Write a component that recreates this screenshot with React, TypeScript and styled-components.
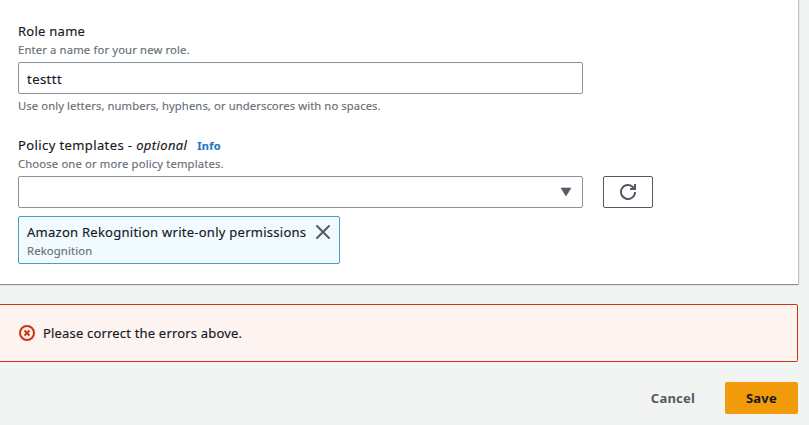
import React from "react";
import styled, { createGlobalStyle } from "styled-components";

const GlobalStyle = createGlobalStyle`
  *, *::before, *::after { box-sizing: border-box; }
  body {
    margin: 0;
    overflow: hidden;
    background: #f2f3f3;
    color: #16191f;
    font-family: "Noto Sans", "Open Sans", sans-serif;
    font-size: 13px;
    line-height: 20px;
    -webkit-text-stroke: 0.15px currentColor;
  }
`;

const Page = styled.main`
  width: 809px;
  height: 425px;
  padding-right: 11px;
  display: flex;
  flex-direction: column;
  overflow: hidden;
`;

const Panel = styled.section`
  height: 284px;
  padding: 21px 18px 0;
  background: #fff;
  box-shadow: 0 1px 0 #879596, 1px 0 0 #bcc4c5, 1px 1px 0 #a9b3b4, 0 2px 0 #dfe3e3, 2px 0 0 #e6e9e9;
`;

const Field = styled.div`
  display: flex;
  flex-direction: column;
  & + & { margin-top: 21px; }
`;

const Label = styled.label<{ $tracking?: string }>`
  height: 20px;
  white-space: pre;
  letter-spacing: ${(p) => p.$tracking ?? "0.26px"};
`;

const Hint = styled.span`
  height: 16px;
  font-size: 11.25px;
  line-height: 18px;
  color: #687078;
  white-space: nowrap;
  letter-spacing: 0.15px;
`;

const Constraint = styled(Hint)`
  line-height: 16px;
  letter-spacing: 0.09px;
`;

const InfoLink = styled.a`
  margin-left: 10px;
  color: #2b74c2;
  font-size: 11px;
  font-weight: 700;
  letter-spacing: 0.2px;
`;

const TextInput = styled.input`
  width: 565px;
  height: 32px;
  margin: 5px 0 4px;
  padding: 2px 8px 0;
  border: 1px solid #879596;
  border-radius: 2px;
  background: #fff;
  color: #16191f;
  font: inherit;
  letter-spacing: 0.45px;
  outline: none;
`;

const SelectRow = styled.div`
  display: flex;
  gap: 20px;
  margin: 5px 0 8px;
`;

const SelectTrigger = styled.button`
  display: flex;
  align-items: center;
  justify-content: flex-end;
  width: 565px;
  height: 32px;
  padding: 0 10px;
  border: 1px solid #879596;
  border-radius: 2px;
  background: #fff;
`;

const IconButton = styled.button`
  display: flex;
  align-items: center;
  justify-content: center;
  width: 50px;
  height: 32px;
  padding: 0;
  border: 1px solid #545b64;
  border-radius: 2px;
  background: #fff;
`;

const Token = styled.div`
  display: flex;
  justify-content: space-between;
  width: 322px;
  height: 48px;
  padding: 5px 8px 0;
  border: 1px solid #44a0c4;
  border-radius: 2px;
  background: #f1faff;
`;

const TokenText = styled.div`
  display: flex;
  flex-direction: column;
`;

const DismissButton = styled.button`
  width: 16px;
  height: 16px;
  margin-top: 2px;
  padding: 0;
  border: 0;
  background: none;
`;

const Icon = styled.svg`
  display: block;
  flex: none;
  fill: none;
`;

const Alert = styled.div`
  display: flex;
  align-items: center;
  gap: 8px;
  height: 58px;
  margin-top: 20px;
  padding-left: 19px;
  border: 1px solid #d13212;
  border-left: 0;
  border-radius: 0 2px 2px 0;
  background: #fdf3f1;
`;

const Message = styled.span`
  letter-spacing: 0.18px;
`;

const Actions = styled.div`
  display: flex;
  justify-content: flex-end;
  gap: 10px;
  margin-top: 20px;
`;

const Button = styled.button<{ $primary?: boolean }>`
  height: 32px;
  padding: 0;
  width: ${(p) => (p.$primary ? "73px" : "84px")};
  border: 0;
  border-radius: 2px;
  background: ${(p) => (p.$primary ? "#f19a0a" : "transparent")};
  color: ${(p) => (p.$primary ? "#16191f" : "#545b64")};
  font: inherit;
  font-weight: 700;
  letter-spacing: 0.25px;
  -webkit-text-stroke: 0;
`;

export default function App() {
  return (
    <>
      <GlobalStyle />
      <Page>
        <Panel>
          <Field>
            <Label htmlFor="role">Role name</Label>
            <Hint>Enter a name for your new role.</Hint>
            <TextInput id="role" defaultValue="testtt" />
            <Constraint>
              Use only letters, numbers, hyphens, or underscores with no spaces.
            </Constraint>
          </Field>
          <Field>
            <Label $tracking="0.39px">
              Policy templates - <em>optional</em>
              <InfoLink>Info</InfoLink>
            </Label>
            <Hint>Choose one or more policy templates.</Hint>
            <SelectRow>
              <SelectTrigger aria-label="Policy templates">
                <Icon width="12" height="10" viewBox="0 0 12 10">
                  <path d="M1 1h10L6 9z" fill="#545b64" stroke="#545b64" strokeLinejoin="round" strokeWidth=".6" />
                </Icon>
              </SelectTrigger>
              <IconButton aria-label="Refresh">
                <Icon width="16" height="16" viewBox="0 0 16 16" stroke="#545b64" strokeWidth="2">
                  <path d="M15 8a7 7 0 1 1-2.1-5L15 5" />
                  <path d="M10 5h5V0" />
                </Icon>
              </IconButton>
            </SelectRow>
            <Token>
              <TokenText>
                <Label>Amazon Rekognition write-only permissions</Label>
                <Hint>Rekognition</Hint>
              </TokenText>
              <DismissButton aria-label="Remove">
                <Icon width="16" height="16" viewBox="0 0 16 16" stroke="#545b64" strokeWidth="2" strokeLinecap="round">
                  <path d="m2 2 12 12M14 2 2 14" />
                </Icon>
              </DismissButton>
            </Token>
          </Field>
        </Panel>
        <Alert role="alert">
          <Icon width="16" height="16" viewBox="0 0 16 16" stroke="#d13212" strokeWidth="2">
            <circle cx="8" cy="8" r="7" />
            <path d="m5.5 5.5 5 5M10.5 5.5l-5 5" />
          </Icon>
          <Message>Please correct the errors above.</Message>
        </Alert>
        <Actions>
          <Button>Cancel</Button>
          <Button $primary>Save</Button>
        </Actions>
      </Page>
    </>
  );
}
